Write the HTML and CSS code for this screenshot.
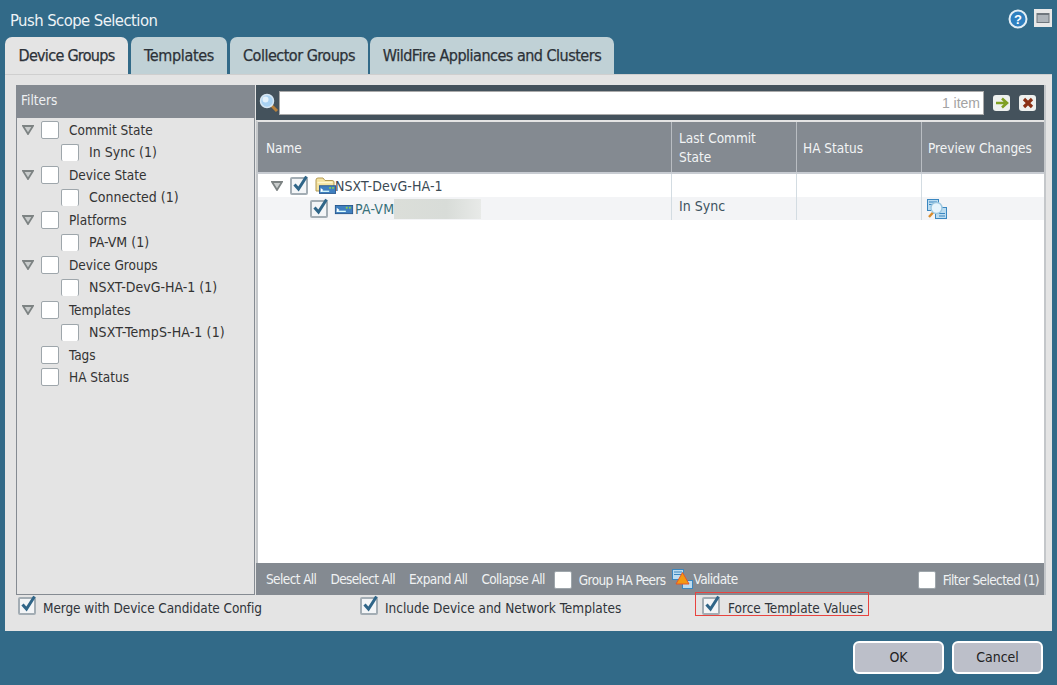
FILE: index.html
```html
<!DOCTYPE html>
<html lang="en">
<head>
<meta charset="utf-8">
<title>Push Scope Selection</title>
<link rel="stylesheet" href="styles.css">
</head>
<body>
<svg class="defs" width="0" height="0" aria-hidden="true">
  <defs>
    <symbol id="tick" viewBox="0 0 18 18"><path d="M3.5 9.5 L7.5 14 L15.5 1.5" fill="none" stroke="#2f6588" stroke-width="3"/></symbol>
    <symbol id="twist" viewBox="0 0 12 10"><path d="M1 1 H11 L6 9 Z" fill="#c9cccc" stroke="#7d8383" stroke-width="1.8"/></symbol>
    <symbol id="device" viewBox="0 0 20 11"><rect x=".5" y=".5" width="19" height="9" fill="#3f7fc0" stroke="#24558c"/><path d="M2 7h10" stroke="#dff" stroke-width="1.5"/><path d="M2 3v5l3-2.500z" fill="#fff"/><rect x="12" y="2" width="2" height="2" fill="#8ed04a"/><rect x="15.500" y="2" width="2" height="2" fill="#8ed04a"/></symbol>
  </defs>
</svg>
<div class="dialog">
  <header class="titlebar">
    <h1 class="title">Push Scope Selection</h1>
    <div class="window-tools">
      <svg class="help" width="20" height="20" viewBox="0 0 20 20"><circle cx="10" cy="10" r="8.500" fill="#2f80c0" stroke="#e4eef5" stroke-width="2"/><text x="10" y="14.500" text-anchor="middle" class="help-q">?</text></svg>
      <svg width="18" height="18" viewBox="0 0 18 18"><rect width="18" height="18" fill="#e8e8e8"/><rect x="3" y="4.500" width="12" height="9" fill="#aeb4ba" stroke="#6f767d"/><rect x="3" y="4" width="12" height="2" fill="#6f767d"/></svg>
    </div>
  </header>

  <nav class="tabs">
    <div class="tab tab-active tab-dg">Device Groups</div>
    <div class="tab tab-tpl">Templates</div>
    <div class="tab tab-cg">Collector Groups</div>
    <div class="tab tab-wf">WildFire Appliances and Clusters</div>
  </nav>

  <main class="panel">
    <div class="columns">
      <aside class="filters">
        <div class="filters-head">Filters</div>
        <ul class="filter-list">
          <li class="f-row"><svg class="twist"><use href="#twist"/></svg><span class="cb"></span><span>Commit State</span></li>
          <li class="f-row f-child"><span class="cb"></span><span>In Sync (1)</span></li>
          <li class="f-row"><svg class="twist"><use href="#twist"/></svg><span class="cb"></span><span>Device State</span></li>
          <li class="f-row f-child"><span class="cb"></span><span>Connected (1)</span></li>
          <li class="f-row"><svg class="twist"><use href="#twist"/></svg><span class="cb"></span><span>Platforms</span></li>
          <li class="f-row f-child"><span class="cb"></span><span>PA-VM (1)</span></li>
          <li class="f-row"><svg class="twist"><use href="#twist"/></svg><span class="cb"></span><span>Device Groups</span></li>
          <li class="f-row f-child"><span class="cb"></span><span>NSXT-DevG-HA-1 (1)</span></li>
          <li class="f-row"><svg class="twist"><use href="#twist"/></svg><span class="cb"></span><span>Templates</span></li>
          <li class="f-row f-child"><span class="cb"></span><span class="f-wide">NSXT-TempS-HA-1 (1)</span></li>
          <li class="f-row f-plain"><span class="cb"></span><span>Tags</span></li>
          <li class="f-row f-plain"><span class="cb"></span><span>HA Status</span></li>
        </ul>
      </aside>

      <section class="results">
        <div class="search">
          <svg width="20" height="20" viewBox="0 0 20 20"><path d="M12 12 L18 18" stroke="#b9803a" stroke-width="3"/><circle cx="8" cy="8" r="6.500" fill="#a9d2f2" stroke="#d5e6f3" stroke-width="1.500"/><circle cx="6.500" cy="6.500" r="3" fill="#e4f2fc"/></svg>
          <div class="search-box">1 item</div>
          <span class="sbtn"><svg width="14" height="12" viewBox="0 0 14 12"><path d="M1 6h9M7 1.500 L12 6 L7 10.500" fill="none" stroke="#7f9f22" stroke-width="2.600"/></svg></span>
          <span class="sbtn sbtn-x"><svg width="12" height="12" viewBox="0 0 12 12"><path d="M2 2 L10 10 M10 2 L2 10" stroke="#8a2f14" stroke-width="3.200"/></svg></span>
        </div>
        <div class="grid-head">
          <div class="gh">Name</div>
          <div class="gh">Last Commit<br>State</div>
          <div class="gh gh-ha">HA Status</div>
          <div class="gh gh-prev">Preview Changes</div>
        </div>
        <div class="grid-body">
          <div class="g-row">
            <div class="g-cell g-name">
              <svg class="twist"><use href="#twist"/></svg>
              <span class="cb cb-on"><svg><use href="#tick"/></svg></span>
              <svg class="folder" width="21" height="18" viewBox="0 0 21 18"><path d="M1 14 V3 Q1 1 3 1 H8 L10 3.500 H17 Q19 3.500 19 5 V14 Z" fill="#f4e3a0" stroke="#b39a55"/><path d="M2.500 5.500 H17.500" stroke="#fff6cf" stroke-width="1.500"/><use href="#device" x="4" y="8" width="17" height="10"/></svg>
              <span class="g-label">NSXT-DevG-HA-1</span>
            </div>
            <div class="g-cell"></div><div class="g-cell"></div><div class="g-cell g-last"></div>
          </div>
          <div class="g-row g-alt">
            <div class="g-cell g-name g-name-child">
              <span class="cb cb-on"><svg><use href="#tick"/></svg></span>
              <svg class="dev" width="20" height="10"><use href="#device"/></svg>
              <span class="g-label g-label-dev">PA-VM</span>
              <span class="redact"></span>
            </div>
            <div class="g-cell g-state">In Sync</div>
            <div class="g-cell"></div>
            <div class="g-cell g-last g-prev">
              <svg width="20" height="20" viewBox="0 0 20 20"><rect x=".5" y=".5" width="11" height="11" fill="#bcdcf0" stroke="#3b87c0"/><path d="M2 3h8M2 5.500h8" stroke="#3b87c0"/><rect x="8.500" y="8.500" width="11" height="11" fill="#bcdcf0" stroke="#3b87c0"/><path d="M12 14.500h6M12 17h6" stroke="#3b87c0"/><path d="M6.500 13 L2 18" stroke="#d98b2a" stroke-width="2.400"/><circle cx="9.500" cy="9" r="5.500" fill="#e6f4fc" stroke="#9cc7e0" stroke-width="1.400"/></svg>
            </div>
          </div>
        </div>
        <div class="grid-foot">
          <span>Select All</span>
          <span>Deselect All</span>
          <span>Expand All</span>
          <span>Collapse All</span>
          <span class="cb cb-foot"></span>
          <span class="foot-low">Group HA Peers</span>
          <span class="validate">
            <svg width="21" height="20" viewBox="0 0 21 20"><rect x=".5" y=".5" width="11" height="10" fill="#bcdcf0" stroke="#3b87c0"/><path d="M2 3h8M2 5.500h8" stroke="#3b87c0"/><rect x="10.500" y="11.500" width="10" height="8" fill="#bcdcf0" stroke="#3b87c0"/><path d="M10.500 3.500 L17 15 H4 Z" fill="#f39a12" stroke="#e5562a"/></svg>
            Validate
          </span>
          <span class="foot-right"><span class="cb cb-foot"></span><span class="foot-low">Filter Selected (1)</span></span>
        </div>
      </section>
    </div>

    <div class="options">
      <label class="opt opt-merge"><span class="cb cb-on"><svg><use href="#tick"/></svg></span>Merge with Device Candidate Config</label>
      <label class="opt opt-incl"><span class="cb cb-on"><svg><use href="#tick"/></svg></span>Include Device and Network Templates</label>
      <label class="opt opt-force"><span class="cb cb-on"><svg><use href="#tick"/></svg></span>Force Template Values<span class="annot"></span></label>
    </div>
  </main>

  <footer class="actions">
    <button class="btn" type="button">OK</button>
    <button class="btn" type="button">Cancel</button>
  </footer>
</div>
</body>
</html>
```
FILE: styles.css
```css
* { box-sizing: border-box; }
html, body { margin: 0; padding: 0; }
body {
  width: 1057px; height: 685px; overflow: hidden;
  background: #326a88;
  font-family: "DejaVu Sans", sans-serif;
  font-stretch: condensed;
  font-size: 13.5px;
  color: #333;
}
.defs { position: absolute; }
.dialog { display: flex; flex-direction: column; height: 685px; }

.titlebar { height: 37px; display: flex; justify-content: space-between; padding: 9px 5px 0 10px; }
.title { margin: 0; font-size: 16.5px; font-weight: 400; letter-spacing: -.55px; color: #eef3f6; line-height: 24px; }
.window-tools { display: flex; gap: 6px; }
.help-q { font: bold 13px "Liberation Sans", sans-serif; fill: #fff; }

.tabs { height: 37px; display: flex; padding-left: 5px; }
.tab {
  height: 37px; display: flex; align-items: center; justify-content: center;
  background: #c0d1d6; border-radius: 7px 7px 0 0;
  font-size: 16px; letter-spacing: -.5px; color: #2c3138; padding-bottom: 1px;
  -webkit-text-stroke: .25px #2c3138;
}
.tab-active { background: #e4e4e4; }
.tab-dg { width: 123px; margin-right: 3px; letter-spacing: -.7px; }
.tab-tpl { width: 96px; margin-right: 3px; letter-spacing: -.35px; }
.tab-cg { width: 138px; margin-right: 2px; }
.tab-wf { width: 244px; }

.panel {
  margin: 0 5px; height: 557px; background: #e4e4e4;
  border-top: 1px solid #cfcfcf;
  padding: 10px 6px 0 11px;
  display: flex; flex-direction: column;
}
.columns { display: flex; height: 510px; }

.filters { width: 239px; border: 1px solid #858b92; border-top: 0; margin-right: 1px; background: #e4e4e4; }
.filters-head { height: 33px; margin: 0 -1px; background: #848a91; color: #eef0f2; line-height: 30px; padding-left: 5px; font-size: 13.5px; }
.filter-list { list-style: none; margin: 0; padding: .4px 0 0; }
.f-row { height: 22.5px; display: flex; align-items: center; padding-left: 5px; }
.twist { width: 12px; height: 10px; flex: none; margin-right: 7px; }
.f-row .cb { margin-right: 10px; }
.f-child { padding-left: 44px; font-size: 14px; }
.f-child .cb { height: 17px; margin-top: 1px; border-bottom: 0; }
.f-wide { letter-spacing: .12px; }
.f-plain { padding-left: 24px; }

.cb {
  display: inline-block; flex: none; width: 18px; height: 18px;
  background: #fff; border: 1px solid #9ea6ab; border-radius: 2px;
  position: relative;
}
.cb svg { width: 18px; height: 18px; position: absolute; left: 0; top: -2px; }
.cb-on { background: #f3f5f7; border: 2px solid #a3adb4; }
.cb-on svg { left: -1px; top: -4px; }

.results { flex: 1; display: flex; flex-direction: column; min-width: 0; border-right: 2px solid #c4c7ca; }
.search { height: 35px; background: #44525c; display: flex; align-items: center; padding: 0 8px 0 3px; }
.search-box {
  width: 705px; height: 24px; margin-right: 9px; background: #fff; border: 1px solid #aaa;
  text-align: right; color: #a3a3a3; font: 14px/22px "Liberation Sans", sans-serif; padding-right: 3px;
}
.sbtn {
  width: 17px; height: 16px; margin-right: 9px; background: #eef0ee; border-radius: 3px;
  display: flex; align-items: center; justify-content: center;
}
.sbtn:last-child { margin-right: 0; }

.grid-head {
  height: 54px; display: grid; grid-template-columns: 414px 125px 125px 1fr;
  background: #848a91; color: #f2f4f5; border-top: 2px solid #e4e4e4; border-left: 2px solid #c4c7ca;
  border-bottom: 2px solid #c8ccd2;
}
.gh { display: flex; align-items: center; padding: 2px 0 0 7px; line-height: 19px; border-right: 1px solid #b9bdc2; }
.gh:first-child { padding-left: 8px; }
.gh-ha { padding-left: 6px; }
.gh-prev { border-right: 0; padding-left: 6px; }

.grid-body { flex: 1; background: #fff; border-left: 2px solid #c4c7ca; }
.g-row { display: grid; grid-template-columns: 414px 125px 125px 1fr; height: 23px; }
.g-alt { background: #f3f4f6; }
.g-cell { border-right: 1px solid #d3dce2; display: flex; align-items: center; padding-left: 7px; position: relative; font-size: 14px; }
.g-last { border-right: 0; }
.g-name { padding-left: 13px; color: #3b4a54; }
.g-name .twist { margin-right: 7px; }
.g-name .cb { margin-right: 7px; }
.g-name-child { padding-left: 52px; }
.g-name-child .cb { margin-right: 6px; }
.g-label { margin-left: -1px; letter-spacing: .1px; }
.g-label-dev { color: #37707a; margin-left: 1px; letter-spacing: .2px; }
.dev { flex: none; margin-top: 3px; }
.folder { flex: none; }
.redact { width: 87px; height: 20px; background: linear-gradient(90deg, #dbded9, #d8dcd8 60%, #e8eae8); }
.g-state { align-items: flex-start; padding-top: 1px; color: #3d5260; }
.g-prev { padding-left: 5px; }

.grid-foot {
  height: 32px; background: #848a91; color: #f0f2f3; display: flex; align-items: center;
  padding: 0 5px 1px 10px; white-space: nowrap; letter-spacing: -.6px;
}
.grid-foot > span { margin-right: 14px; }
.grid-foot .cb-foot { margin: 2px 7px 0 -5px; }
.grid-foot .foot-low { margin-top: 3px; margin-right: 6px; }
.validate { display: flex; align-items: center; gap: 1px; margin-right: 0 !important; }
.foot-right { margin-left: auto; margin-right: 0 !important; display: flex; align-items: center; }
.foot-right .cb-foot { margin-left: 0 !important; margin-right: 7px !important; }
.foot-right .foot-low { margin-right: 0 !important; }

.options { flex: 1; display: flex; align-items: center; padding-bottom: 13px; position: relative; }
.opt { display: flex; align-items: center; white-space: nowrap; color: #30343a; position: relative; padding-top: 3px; }
.opt .cb { margin-right: 7px; margin-top: -4px; }
.opt-merge { margin-left: 2px; width: 342px; letter-spacing: -.08px; }
.opt-incl { width: 335px; margin-right: 7px; }
.opt-force .cb { margin-right: 8px; }
.annot { position: absolute; left: -7px; right: -6px; top: -5px; height: 24px; border: 1px solid #e8433f; pointer-events: none; }

.actions { flex: 1; display: flex; justify-content: flex-end; gap: 8px; padding: 10px 14px 0 0; }
.btn {
  width: 91px; height: 33px; padding: 0 0 2px; background: #bcbfc9; border: 2px solid #fff; border-radius: 6px;
  font: 14px "DejaVu Sans", sans-serif; font-stretch: condensed; color: #222;
}
```
